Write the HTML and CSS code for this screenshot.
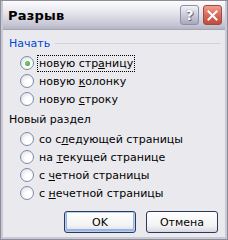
FILE: index.html
```html
<!DOCTYPE html>
<html lang="ru">
<head>
    <meta charset="UTF-8">
    <title>Разрыв</title>
    <link rel="stylesheet" href="styles.css">
</head>
<body>
    <div class="window">
        <div class="titlebar">
            <span class="title">Разрыв</span>
            <div class="controls">
                <span class="btn-help">?</span>
                <span class="btn-close">
                    <svg width="11" height="11" viewBox="0 0 11 11">
                        <path d="M1.5 1.5 L9.5 9.5 M9.5 1.5 L1.5 9.5" stroke="#fff" stroke-width="2" stroke-linecap="square"/>
                    </svg>
                </span>
            </div>
        </div>

        <div class="client">
            <div class="group-head">
                <span class="group-label">Начать</span>
                <span class="group-line"></span>
            </div>
            <div class="options">
                <label class="option"><span class="radio checked"></span><span class="text focused">новую стр<u>а</u>ницу</span></label>
                <label class="option"><span class="radio"></span><span class="text">новую <u>к</u>олонку</span></label>
                <label class="option"><span class="radio"></span><span class="text">новую <u>с</u>троку</span></label>
            </div>

            <div class="section-label">Новый раздел</div>
            <div class="options section-options">
                <label class="option"><span class="radio"></span><span class="text">со с<u>л</u>едующей страницы</span></label>
                <label class="option"><span class="radio"></span><span class="text">на <u>т</u>екущей странице</span></label>
                <label class="option"><span class="radio"></span><span class="text">с <u>ч</u>етной страницы</span></label>
                <label class="option"><span class="radio"></span><span class="text">с <u>н</u>ечетной страницы</span></label>
            </div>

            <div class="buttons">
                <button class="btn default">OK</button>
                <button class="btn">Отмена</button>
            </div>
        </div>
    </div>
</body>
</html>
```

FILE: styles.css
```css
body {
    margin: 0;
    background-color: #fff;
    font-family: "DejaVu Sans", sans-serif;
    font-size: 11px;
    color: #000;
}
.window {
    width: 228px;
    height: 240px;
    box-sizing: border-box;
    background-color: #c9c9d4;
    border: 1px solid #8c8c9c;
    padding: 0 2px 2px 2px;
    display: flex;
    flex-direction: column;
}
.titlebar {
    height: 28px;
    flex-shrink: 0;
    display: flex;
    align-items: center;
    justify-content: space-between;
    padding: 0 3px 0 5px;
    background: linear-gradient(#fdfdfe, #e6e6ee 40%, #c6c6d4 85%, #b4b4c4);
}
.title {
    font-family: "DejaVu Sans", sans-serif;
    font-weight: bold;
    font-size: 13px;
    letter-spacing: 0.2px;
    color: #000;
}
.controls {
    display: flex;
    gap: 4px;
}
.btn-help,
.btn-close {
    width: 19px;
    height: 20px;
    box-sizing: border-box;
    border-radius: 3px;
    display: flex;
    align-items: center;
    justify-content: center;
}
.btn-help {
    border: 1px solid #8f8fa6;
    background: linear-gradient(#f2f2f8, #c4c4d4 60%, #a8a8bc);
    color: #fff;
    font-weight: bold;
    font-size: 14px;
    text-shadow: 0 0 1px #5a5a70, 1px 1px 0 #6e6e86;
}
.btn-close {
    border: 1px solid #a04a40;
    background: linear-gradient(#f0a090, #d86a58 50%, #c04c3c);
}
.client {
    flex: 1;
    min-height: 0;
    background-color: #eaeaee;
    border-top: 1px solid #a6a6b4;
    padding: 6px 5px 0 6px;
    display: flex;
    flex-direction: column;
}
.group-head {
    display: flex;
    align-items: center;
    gap: 5px;
    height: 14px;
}
.group-label {
    color: #0046d5;
}
.group-line {
    flex: 1;
    height: 0;
    border-top: 1px solid #d0d0d8;
}
.options {
    display: flex;
    flex-direction: column;
    padding-left: 11px;
    margin-top: 4px;
}
.section-options {
    margin-top: 3px;
}
.option {
    display: flex;
    align-items: center;
    gap: 3px;
    height: 18px;
}
.radio {
    width: 14px;
    height: 14px;
    box-sizing: border-box;
    border-radius: 50%;
    border: 1px solid #7b8ca6;
    background: radial-gradient(circle at 65% 65%, #fff 30%, #dcdce6 90%);
    display: flex;
    align-items: center;
    justify-content: center;
}
.radio.checked::after {
    content: "";
    width: 5px;
    height: 5px;
    border-radius: 50%;
    background: radial-gradient(circle at 40% 40%, #7ed26e, #2f9a2c);
}
.text {
    padding: 1px 1px;
    border: 1px dotted transparent;
}
.text.focused {
    border-color: #000;
}
.section-label {
    margin-top: 5px;
    height: 14px;
}
.buttons {
    display: flex;
    justify-content: flex-end;
    gap: 10px;
    margin-top: 9px;
    padding-right: 2px;
}
.btn {
    width: 72px;
    height: 22px;
    font-family: "DejaVu Sans", sans-serif;
    font-size: 11px;
    color: #000;
    border: 1px solid #2c3a5a;
    border-radius: 3px;
    background: linear-gradient(#ffffff, #f2f2f4 70%, #d6d6e0);
    padding: 0;
}
.btn.default {
    box-shadow: inset 0 0 0 1px #b8d0f0, inset 0 -1px 0 2px #98b4e4;
}
```
